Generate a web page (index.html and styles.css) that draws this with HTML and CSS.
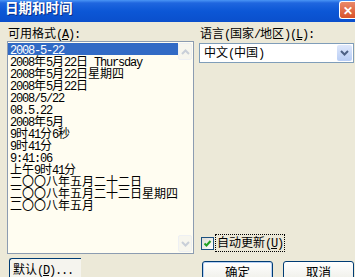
FILE: index.html
```html
<!DOCTYPE html>
<html lang="zh-CN">
<head>
  <meta charset="UTF-8">
  <title>日期和时间</title>
  <link rel="stylesheet" href="styles.css">
</head>
<body>
<div class="window">
  <div class="titlebar">
    <span class="title">日期和时间</span>
    <span class="close">✕</span>
  </div>
  <div class="content">
    <div class="col-left">
      <div class="label">可用格式<span class="en">(<u>A</u>):</span></div>
      <div class="listbox">
        <ul class="items">
          <li class="selected"><span class="en">2008-5-22</span></li>
          <li><span class="en">2008</span>年<span class="en">5</span>月<span class="en">22</span>日<span class="en"> Thursday</span></li>
          <li><span class="en">2008</span>年<span class="en">5</span>月<span class="en">22</span>日星期四</li>
          <li><span class="en">2008</span>年<span class="en">5</span>月<span class="en">22</span>日</li>
          <li><span class="en">2008/5/22</span></li>
          <li><span class="en">08.5.22</span></li>
          <li><span class="en">2008</span>年<span class="en">5</span>月</li>
          <li><span class="en">9</span>时<span class="en">41</span>分<span class="en">6</span>秒</li>
          <li><span class="en">9</span>时<span class="en">41</span>分</li>
          <li><span class="en">9:41:06</span></li>
          <li>上午<span class="en">9</span>时<span class="en">41</span>分</li>
          <li>二〇〇八年五月二十二日</li>
          <li>二〇〇八年五月二十二日星期四</li>
          <li>二〇〇八年五月</li>
        </ul>
        <div class="scrollbar">
          <div class="sb-btn">
            <svg width="9" height="6" viewBox="0 0 9 6"><path d="M1 5 L4.5 1.5 L8 5" fill="none" stroke="#c9cfd8" stroke-width="2"/></svg>
          </div>
          <div class="sb-track"></div>
          <div class="sb-btn">
            <svg width="9" height="6" viewBox="0 0 9 6"><path d="M1 1 L4.5 4.5 L8 1" fill="none" stroke="#c9cfd8" stroke-width="2"/></svg>
          </div>
        </div>
      </div>
      <div class="button btn-default">默认<span class="en">(<u>D</u>)...</span></div>
    </div>
    <div class="col-right">
      <div class="label">语言<span class="en">(</span>国家<span class="en">/</span>地区<span class="en">)(<u>L</u>):</span></div>
      <div class="combo">
        <span class="combo-text">中文<span class="en">(</span>中国<span class="en">)</span></span>
        <span class="combo-btn">
          <svg width="9" height="6" viewBox="0 0 9 6"><path d="M1 1 L4.5 4.5 L8 1" fill="none" stroke="#4d6185" stroke-width="2"/></svg>
        </span>
      </div>
      <div class="check-row">
        <span class="checkbox">
          <svg width="9" height="9" viewBox="0 0 9 9"><path d="M1.5 4.5 L3.5 6.5 L7.5 2" fill="none" stroke="#21a121" stroke-width="2"/></svg>
        </span>
        <span class="check-label">自动更新<span class="en">(<u>U</u>)</span></span>
      </div>
      <div class="buttons">
        <div class="button btn-ok">确定</div>
        <div class="button">取消</div>
      </div>
    </div>
  </div>
</div>
</body>
</html>
```

FILE: styles.css
```css
body {
  margin: 0;
  font-family: "Noto Sans CJK SC", "Liberation Sans", sans-serif;
  font-size: 12px;
  color: #000;
  background: #ece9d8;
}
.window {
  width: 355px;
  height: 277px;
  overflow: hidden;
  background: #ece9d8;
}
.titlebar {
  height: 22px;
  display: flex;
  align-items: flex-start;
  justify-content: space-between;
  background: linear-gradient(to bottom, #4a95f5 0, #1f66df 3px, #0c57d6 50%, #0a4fcc 100%);
}
.title {
  color: #fff;
  font-weight: bold;
  font-size: 13.5px;
  line-height: 17px;
  margin-top: -1px;
  padding-left: 5px;
  text-shadow: 1px 1px 0 #0a2f86;
}
.close {
  width: 15px;
  height: 16px;
  margin-top: 1px;
  border: 1px solid #fff;
  border-right: none;
  border-radius: 3px 0 0 3px;
  background: linear-gradient(to bottom, #e9896a, #d9522a);
  color: #fff;
  font-size: 12px;
  line-height: 16px;
  text-align: center;
  font-weight: bold;
}
.en {
  font-family: "Liberation Mono", monospace;
  letter-spacing: -1.2px;
}
.content {
  display: flex;
  padding: 4px 0 0 7px;
  gap: 5px;
}
.col-left {
  width: 187px;
  display: flex;
  flex-direction: column;
}
.col-right {
  flex: 1;
  display: flex;
  flex-direction: column;
  padding-right: 3px;
}
.label {
  height: 14px;
  line-height: 14px;
  padding-left: 1px;
  white-space: nowrap;
}
.listbox {
  margin-top: 1px;
  height: 213px;
  box-sizing: border-box;
  border: 1px solid #8c9cb1;
  background: #fffdf1;
  display: flex;
}
.items {
  list-style: none;
  margin: 0;
  padding: 1px 0 0 0;
  flex: 1;
}
.items li {
  height: 12px;
  line-height: 12px;
  padding-left: 2px;
  white-space: nowrap;
}
.items li.selected {
  background: #316ac5;
  color: #fff;
}
.scrollbar {
  width: 17px;
  display: flex;
  flex-direction: column;
  padding: 1px 1px 1px 0;
}
.sb-btn {
  height: 15px;
  border: 1px solid #eef0f3;
  border-radius: 2px;
  background: #f7f6ee;
  display: flex;
  align-items: center;
  justify-content: center;
}
.sb-track {
  flex: 1;
}
.button {
  box-sizing: border-box;
  height: 23px;
  border: 1px solid #003c74;
  border-radius: 3px;
  background: linear-gradient(to bottom, #fff, #f0f0ea 80%, #d6d0c5);
  text-align: center;
  line-height: 20px;
  font-size: 12.5px;
  white-space: nowrap;
}
.btn-default {
  margin-top: 4px;
  margin-left: 2px;
  width: 72px;
  text-align: left;
  padding-left: 3px;
  border-right: none;
  border-radius: 3px 0 0 3px;
  background: #f5f4ee;
  font-size: 12px;
}
.combo {
  margin-top: 3px;
  height: 20px;
  box-sizing: border-box;
  border: 1px solid #7f9db9;
  background: #fff;
  display: flex;
  align-items: center;
  justify-content: space-between;
}
.combo-text {
  padding-left: 4px;
  line-height: 16px;
}
.combo-btn {
  width: 15px;
  height: 16px;
  margin-right: 1px;
  border-radius: 2px;
  background: linear-gradient(to bottom, #dfe8fb, #b8cdf5);
  display: flex;
  align-items: center;
  justify-content: center;
}
.check-row {
  margin-top: 172px;
  height: 16px;
  display: flex;
  align-items: center;
  gap: 1px;
  padding-left: 2px;
}
.checkbox {
  width: 11px;
  height: 11px;
  border: 1px solid #1c5180;
  background: linear-gradient(135deg, #dcdcd5, #fff);
  display: flex;
  align-items: center;
  justify-content: center;
}
.check-label {
  border: 1px dotted #000;
  padding: 0 1px;
  line-height: 14px;
}
.buttons {
  margin-top: 10px;
  display: flex;
  gap: 10px;
  padding-left: 3px;
}
.buttons .button {
  width: 71px;
}
.btn-ok {
  box-shadow: inset 0 0 0 1px #b7d1f5, inset 0 -2px 0 #89adeb;
}
```
